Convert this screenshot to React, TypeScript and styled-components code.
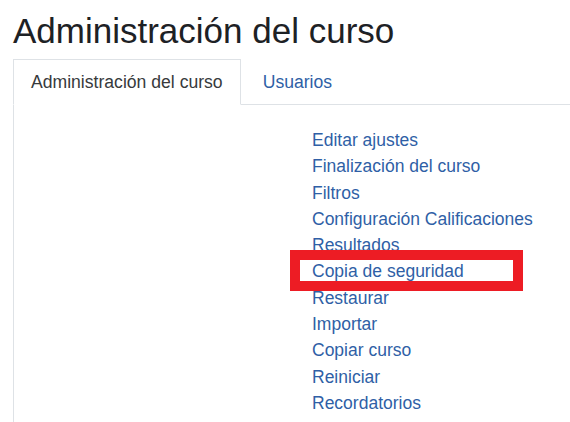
import styled, { createGlobalStyle } from "styled-components"

const GlobalStyle = createGlobalStyle`
    html, body {
        margin: 0;
        padding: 0;
        background: #ffffff;
        overflow: hidden;
    }
    body {
        font-family: "Liberation Sans", Arial, sans-serif;
        color: #1d2125;
    }
`

const links = [
    "Editar ajustes",
    "Finalización del curso",
    "Filtros",
    "Configuración Calificaciones",
    "Resultados",
    "Copia de seguridad",
    "Restaurar",
    "Importar",
    "Copiar curso",
    "Reiniciar",
    "Recordatorios",
]

export default function App() {
    return (
        <>
            <GlobalStyle />
            <Page>
                <Title>Administración del curso</Title>
                <Tabs>
                    <Tab $active>Administración del curso</Tab>
                    <Tab>Usuarios</Tab>
                </Tabs>
                <Panel>
                    <LinkList>
                        {links.map(label => (
                            <li key={label}>
                                <LinkItem $marked={label === "Copia de seguridad"}>{label}</LinkItem>
                            </li>
                        ))}
                    </LinkList>
                </Panel>
            </Page>
        </>
    )
}

const Page = styled.div`
    width: 640px;
    padding-left: 13px;
`

const Title = styled.h2`
    margin: 11px 0 0;
    font-size: 35px;
    font-weight: 400;
    line-height: 40px;
    color: #1d2125;
`

const Tabs = styled.ul`
    display: flex;
    gap: 4px;
    list-style: none;
    margin: 8px 0 0;
    padding: 0;
    border-bottom: 1px solid #dee2e6;
`

const Tab = styled.li<{ $active?: boolean }>`
    display: flex;
    align-items: center;
    height: 44px;
    padding: 0 17px;
    margin-bottom: -1px;
    font-size: 17.6px;
    color: ${p => (p.$active ? "#373a3c" : "#2f5fa6")};
    background: ${p => (p.$active ? "#ffffff" : "transparent")};
    border: 1px solid ${p => (p.$active ? "#dee2e6" : "transparent")};
    border-bottom-color: ${p => (p.$active ? "#ffffff" : "transparent")};
`

const Panel = styled.div`
    border-left: 1px solid #dee2e6;
    padding: 22px 0 40px 298px;
`

const LinkList = styled.ul`
    list-style: none;
    margin: 0;
    padding: 0;
    font-size: 17.5px;
    line-height: 26.3px;
`

const LinkItem = styled.a<{ $marked?: boolean }>`
    position: relative;
    color: #2f5fa6;
    text-decoration: none;

    ${p => p.$marked && `
        &::after {
            content: "";
            position: absolute;
            left: -22px;
            top: -11px;
            width: 213px;
            height: 21px;
            border: 10px solid #ed1c24;
        }
    `}
`
